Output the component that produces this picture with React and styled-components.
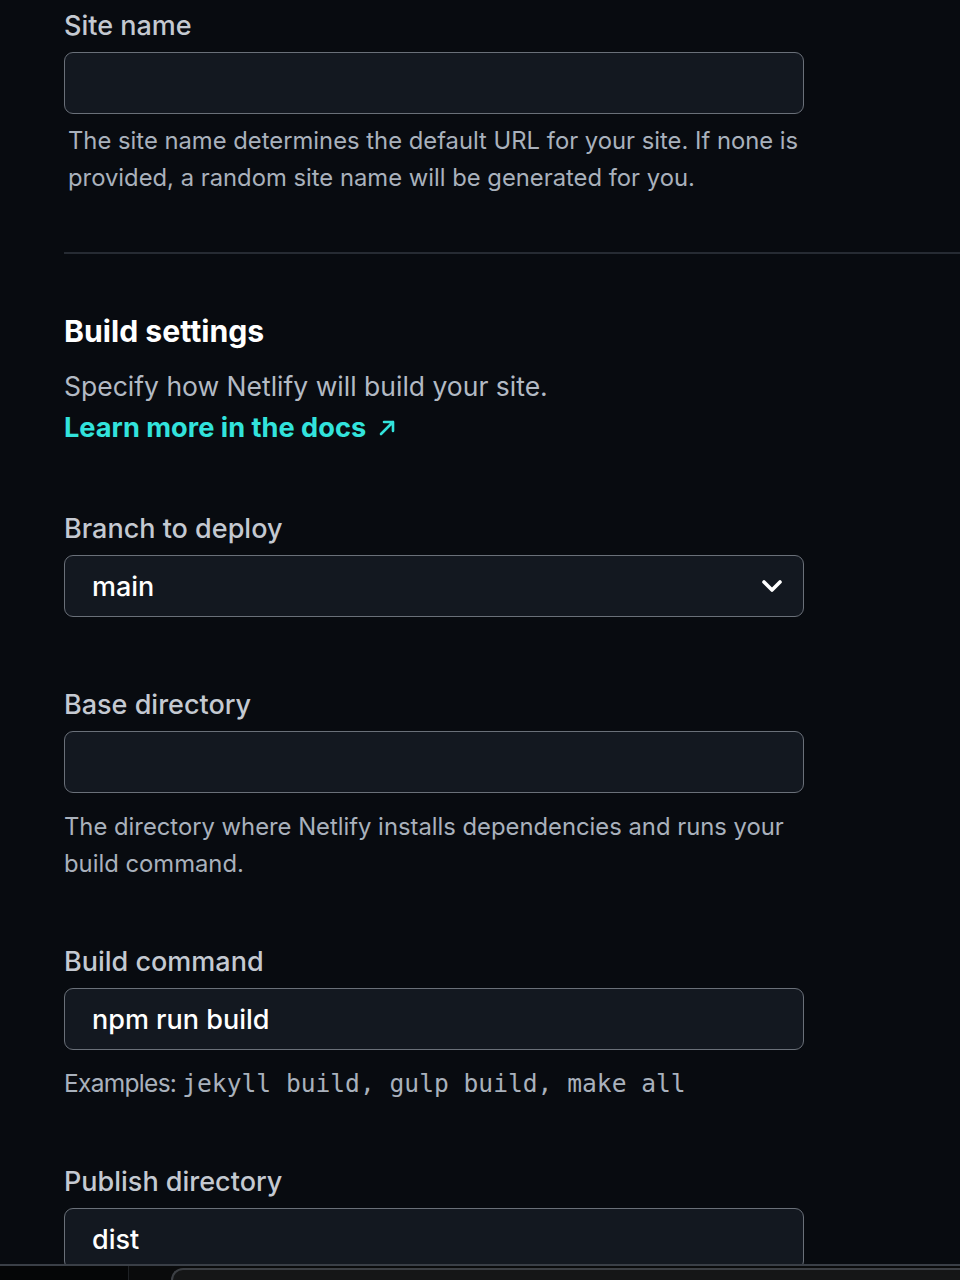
import React from "react";
import styled, { createGlobalStyle } from "styled-components";

const Global = createGlobalStyle`
  html, body {
    margin: 0;
    background: #080b10;
  }
  body {
    font-family: Inter, "Noto Sans", sans-serif;
    -webkit-font-smoothing: antialiased;
  }
`;

const Page = styled.main`
  padding: 8px 0 40px 64px;
  min-height: 1280px;
  box-sizing: border-box;
`;

const Field = styled.div`
  margin-top: ${(p) => p.$gap || 0}px;
  width: 740px;
`;

const Label = styled.label`
  display: block;
  font-size: 27px;
  line-height: 36px;
  font-weight: 500;
  color: #c4c9d1;
  margin-bottom: 8px;
`;

const Box = styled.div`
  height: 62px;
  box-sizing: border-box;
  background: #131820;
  border: 1px solid #6a7079;
  border-radius: 9px;
  display: flex;
  align-items: center;
  justify-content: space-between;
  padding: 0 20px 0 27px;
  font-size: 27px;
  font-weight: 500;
  color: #ffffff;
`;

const Help = styled.p`
  margin: ${(p) => p.$top || 15}px 0 0 ${(p) => p.$indent || 0}px;
  font-size: 23.8px;
  line-height: 37px;
  color: #a9b1bc;
`;

const Divider = styled.hr`
  margin: 56px 0 0 0;
  border: 0;
  height: 2px;
  background: #262b33;
`;

const Title = styled.h2`
  margin: 58px 0 0 0;
  font-size: 30.2px;
  line-height: 38px;
  font-weight: 700;
  color: #ffffff;
`;

const Lead = styled.p`
  margin: 16px 0 0 0;
  font-size: 26.5px;
  line-height: 41px;
  color: #b3bac4;
`;

const DocsLink = styled.a`
  display: inline-flex;
  align-items: center;
  gap: 12px;
  font-size: 27.2px;
  color: #32e3dc;
  font-weight: 700;
  text-decoration: none;
`;

const Examples = styled.p`
  margin: 15px 0 0 0;
  font-size: 24.5px;
  line-height: 36px;
  color: #a9b1bc;
  letter-spacing: -0.7px;
`;

const Code = styled.code`
  font-family: "DejaVu Sans Mono", "Liberation Mono", monospace;
  font-size: 24.6px;
  letter-spacing: 0;
  margin-left: 6px;
`;

const Dock = styled.div`
  position: fixed;
  left: 0;
  right: 0;
  bottom: 0;
  height: 14px;
  background: #0a0b0c;
  border-top: 2px solid #3a3f47;
  display: flex;
  align-items: flex-end;
`;

const DockSide = styled.div`
  width: 128px;
  height: 100%;
  border-right: 1px solid #1e2125;
  background: #050607;
`;

const DockPanel = styled.div`
  margin-left: 42px;
  flex: 1;
  height: 10px;
  border-top: 2px solid #3c3f44;
  border-left: 2px solid #3c3f44;
  border-top-left-radius: 28px;
  background: #151617;
`;

const Chevron = () => (
  <svg width="22" height="22" viewBox="0 0 22 22" fill="none">
    <polyline
      points="3,7 11,15 19,7"
      stroke="#fff"
      strokeWidth="3.6"
      strokeLinecap="round"
      strokeLinejoin="round"
    />
  </svg>
);

const ArrowUpRight = () => (
  <svg width="18" height="18" viewBox="0 0 18 18" fill="none">
    <path
      d="M3 15 L15 3 M6 3 H15 V12"
      stroke="#32e3dc"
      strokeWidth="2.6"
      strokeLinecap="round"
      strokeLinejoin="round"
    />
  </svg>
);

export default function App() {
  return (
    <>
      <Global />
      <Page>
        <Field>
          <Label>Site name</Label>
          <Box />
          <Help $top={8} $indent={4}>
            The site name determines the default URL for your site. If none is
            provided, a random site name will be generated for you.
          </Help>
        </Field>

        <Divider />

        <Title>Build settings</Title>
        <Lead>
          Specify how Netlify will build your site.
          <br />
          <DocsLink href="#">
            Learn more in the docs <ArrowUpRight />
          </DocsLink>
        </Lead>

        <Field $gap={63}>
          <Label>Branch to deploy</Label>
          <Box>
            main
            <Chevron />
          </Box>
        </Field>

        <Field $gap={70}>
          <Label>Base directory</Label>
          <Box />
          <Help>
            The directory where Netlify installs dependencies and runs your
            build command.
          </Help>
        </Field>

        <Field $gap={62}>
          <Label>Build command</Label>
          <Box>npm run build</Box>
          <Examples>
            Examples:<Code>jekyll build, gulp build, make all</Code>
          </Examples>
        </Field>

        <Field $gap={62}>
          <Label>Publish directory</Label>
          <Box>dist</Box>
        </Field>
      </Page>
      <Dock>
        <DockSide />
        <DockPanel />
      </Dock>
    </>
  );
}
